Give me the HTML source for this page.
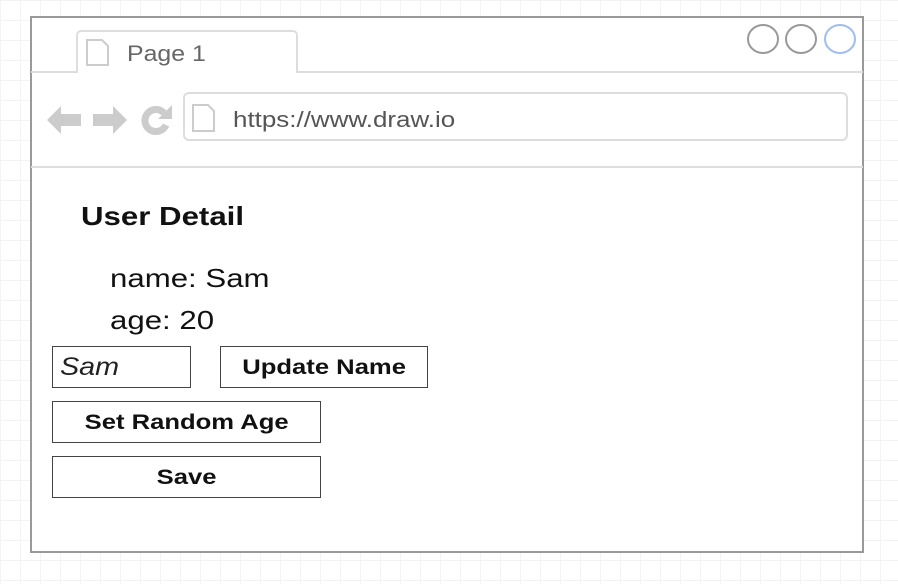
<!DOCTYPE html>
<html><head><style>
body{margin:0;width:898px;height:584px;overflow:hidden;background:#fff;
background-image:linear-gradient(#f3f3f3 1px,transparent 1px),linear-gradient(90deg,#f3f3f3 1px,transparent 1px);background-size:20px 20px;
font-family:"Liberation Sans",sans-serif;position:relative}
.a{position:absolute;box-sizing:border-box}
.s{display:inline-block;transform-origin:left center}
.btn{border:1.5px solid #444;background:#fff;font-weight:bold;font-size:21px;color:#111;text-align:center;line-height:42px}
.btn span{display:inline-block;transform:scaleX(1.22)}
</style></head><body>
<div class="a" style="left:30px;top:16px;width:834px;height:537px;border:2px solid #999;background:#fff"></div>
<div class="a" style="left:31px;top:71px;width:832px;height:2px;background:#ddd"></div>
<div class="a" style="left:76px;top:30px;width:222px;height:43px;border:2px solid #ddd;border-bottom:none;border-radius:5px 5px 0 0;background:#fff"></div>
<svg class="a" style="left:84px;top:38px" width="30" height="30"><path d="M3 2h15l6 6v19H3z" fill="#fff" stroke="#ccc" stroke-width="2"/></svg>
<div class="a" style="left:127px;top:41px;font-size:22px;color:#666"><span class="s" style="transform:scaleX(1.13)">Page 1</span></div>
<svg class="a" style="left:740px;top:20px" width="120" height="40">
<ellipse cx="23" cy="19" rx="15" ry="14" fill="none" stroke="#999" stroke-width="2"/>
<ellipse cx="61" cy="19" rx="15" ry="14" fill="none" stroke="#999" stroke-width="2"/>
<ellipse cx="100" cy="19" rx="15" ry="14" fill="none" stroke="#9ebdf0" stroke-width="2"/></svg>
<svg class="a" style="left:44px;top:100px" width="130" height="40">
<path d="M3 20l14-14v8h20v12H17v8z" fill="#ccc"/>
<path d="M83 20l-14-14v8H49v12h20v8z" fill="#ccc"/>
<path d="M122 25a11 11 0 1 1-2-12" fill="none" stroke="#ccc" stroke-width="7"/>
<path d="M128 5v14h-14z" fill="#ccc"/></svg>
<div class="a" style="left:183px;top:92px;width:665px;height:49px;border:2px solid #ddd;border-radius:6px"></div>
<svg class="a" style="left:190px;top:103px" width="30" height="30"><path d="M3 2h15l6 6v20H3z" fill="#fff" stroke="#ccc" stroke-width="2"/></svg>
<div class="a" style="left:233px;top:107px;font-size:22px;color:#555"><span class="s" style="transform:scaleX(1.18)">https://www.draw.io</span></div>
<div class="a" style="left:31px;top:166px;width:832px;height:2px;background:#ddd"></div>
<div class="a" style="left:81px;top:201px;font-size:26px;font-weight:bold;color:#111"><span class="s" style="transform:scaleX(1.2)">User Detail</span></div>
<div class="a" style="left:110px;top:263px;font-size:26px;color:#111"><span class="s" style="transform:scaleX(1.2)">name: Sam</span></div>
<div class="a" style="left:110px;top:305px;font-size:26px;color:#111"><span class="s" style="transform:scaleX(1.2)">age: 20</span></div>
<div class="a" style="left:52px;top:346px;width:139px;height:42px;border:1.5px solid #444;font-size:25px;font-style:italic;line-height:41px;padding-left:7px;color:#222"><span class="s" style="transform:scaleX(1.15)">Sam</span></div>
<div class="a btn" style="left:220px;top:346px;width:208px;height:42px"><span>Update Name</span></div>
<div class="a btn" style="left:52px;top:401px;width:269px;height:42px"><span>Set Random Age</span></div>
<div class="a btn" style="left:52px;top:456px;width:269px;height:42px"><span>Save</span></div>
</body></html>
